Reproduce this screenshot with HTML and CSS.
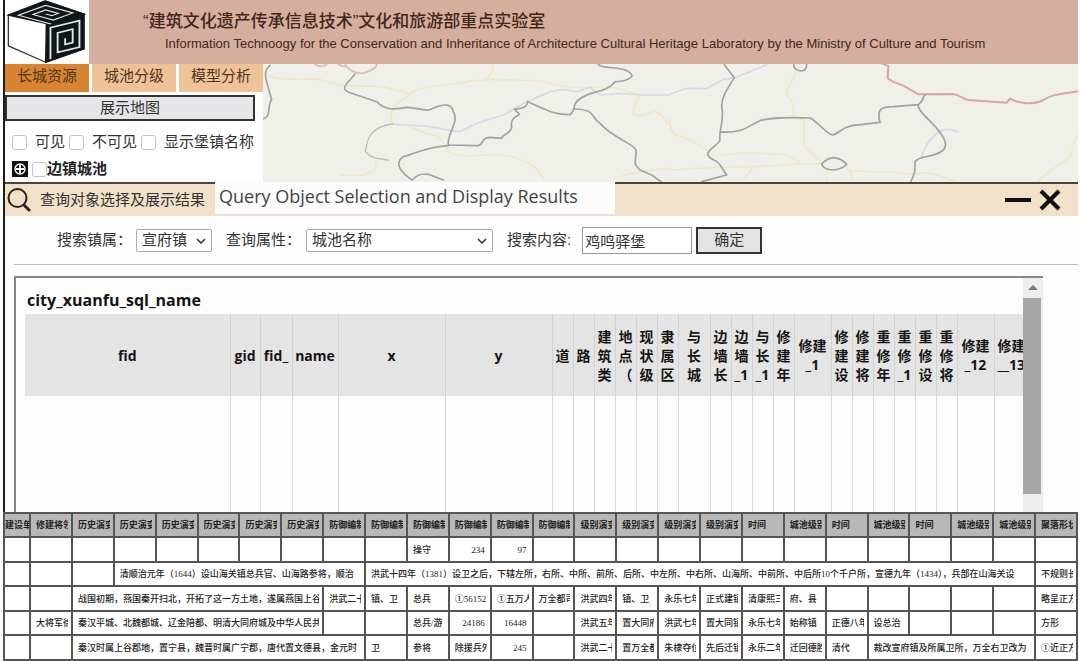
FILE: index.html
```
<!DOCTYPE html>
<html lang="zh-CN">
<head>
<meta charset="utf-8">
<title>城池资源查询</title>
<link rel="stylesheet" href="styles.css">
</head>
<body>
<div class="app">
  <div class="workspace">
    <header class="banner">
      <svg class="logo" viewBox="15 0 250 190" aria-hidden="true">
        <path d="M25 45 135 3 250 42V145L136 185 25 136Z" fill="#fff" stroke="#333" stroke-width="4" stroke-linejoin="round"/>
        <path d="M25 45 135 3 250 42 138 70Z" fill="#101518" stroke="#101518" stroke-width="4"/>
        <path d="M138 70 250 42V145L136 185Z" fill="#101518" stroke="#101518" stroke-width="4"/>
        <g fill="none" stroke="#dfe5e6">
          <path transform="matrix(11.3 3.1 11 -4 25 46)" stroke-width=".5" d="M10 1.3H1.4V8.6H8.6V3.3H3.3V6.7H6.6V5H5"/>
          <path transform="matrix(11.2 -2.7 0 10.8 138 71)" stroke-width=".5" d="M1.1 10V1.3H8.8V8.6H3V3.2H7V6.9H5V5.2"/>
        </g>
      </svg>
      <div class="banner-text">
        <h1>“建筑文化遗产传承信息技术”文化和旅游部重点实验室</h1>
        <p>Information Technoogy for the Conservation and Inheritance of Architecture Cultural Heritage Laboratory by the Ministry of Culture and Tourism</p>
      </div>
    </header>

    <div class="main">
      <aside class="sidebar">
        <nav class="tabs">
          <button class="tab active">长城资源</button>
          <button class="tab">城池分级</button>
          <button class="tab">模型分析</button>
        </nav>
        <button class="show-map">展示地图</button>
        <div class="checks">
          <label><input type="checkbox">可见</label>
          <label><input type="checkbox">不可见</label>
          <label><input type="checkbox">显示堡镇名称</label>
        </div>
        <div class="tree">
          <button class="expand" aria-label="展开">
            <svg viewBox="0 0 16 16"><path d="M0 0H16V16H0Z" fill="#111"/><circle cx="8" cy="8" r="5" fill="none" stroke="#fff" stroke-width="1.4"/><path d="M8 4V12M4 8H12" stroke="#fff" stroke-width="1.8"/></svg>
          </button>
          <label><input type="checkbox">边镇城池</label>
        </div>
      </aside>
      <div class="map">
        <svg viewBox="0 0 2445 354" preserveAspectRatio="xMinYMin slice" aria-hidden="true">
          <g fill="none" stroke-linejoin="round" stroke-linecap="round">
            <g transform="translate(-9 -192)">
              <path d="M25 225C60 245 130 235 180 238C230 262 290 258 350 258C390 262 420 275 450 282C440 300 410 300 400 325C390 340 392 360 398 372M450 280C490 255 530 258 580 252C640 240 670 240 700 238C780 242 840 238 880 252C920 265 960 262 1010 262C1060 255 1090 270 1140 285M700 192C698 215 690 230 675 240M346 482C350 490 350 505 335 515C310 530 270 528 240 525M398 372C450 370 470 395 500 400C540 405 545 425 560 440C560 470 620 470 680 465C740 460 800 480 820 500C840 515 850 530 850 545M1140 285C1130 300 1120 320 1120 345C1160 355 1170 330 1190 335C1210 345 1220 370 1230 375M1080 530C1120 515 1170 510 1230 505" stroke="#f1e6c8" stroke-width="5"/>
              <path d="M398 372C450 380 500 370 560 390L600 395 650 370 730 345 800 305 870 275 910 268 950 275 990 262 1020 285 1080 280 1140 285 1230 285" stroke="#d5d8e5" stroke-width="5"/>
              <path d="M255 192C265 210 280 220 310 220C335 212 350 205 350 192M165 192Q180 205 200 194M235 192Q245 200 255 200" stroke="#dcbcbd" stroke-width="5"/>
              <path d="M30 196C5 215 20 245 35 298C20 320 35 350 10 356M285 222L270 240C250 260 245 270 275 280L350 305C370 325 390 332 440 322C500 325 490 340 530 320C560 310 575 315 580 335C600 365 560 400 565 435L655 437C675 430 660 415 690 412L725 415C730 400 755 400 755 380C750 350 775 350 778 342L763 328C785 325 800 325 803 305C850 325 880 345 930 344C950 330 935 315 955 300C990 270 1040 280 1065 245C1100 245 1120 230 1115 225C1100 195 1030 210 1015 194M945 327C1010 330 990 350 1020 370C1060 415 1120 430 1128 450C1130 490 1115 485 1140 510L1175 525 1203 545M565 437C500 440 470 460 430 470C400 490 425 520 457 540C475 520 490 520 505 523L550 540" stroke="#a0a1a0" stroke-width="5"/>
              <path d="M398 372C330 380 320 420 316 455C335 475 350 475 385 480" stroke="#bbbcb8" stroke-width="4"/>
            </g>
            <g transform="translate(1221 -192)">
              <path d="M378 215C370 245 340 270 355 290C375 305 370 340 372 352L400 360C405 385 395 410 405 440C420 460 445 475 455 490C430 495 400 490 370 492C300 500 240 500 180 500L0 510M0 360C0 400 10 405 50 415C90 430 100 450 135 468C200 455 260 460 320 462C370 465 380 490 400 490M250 502L220 540M470 510V545M540 510L550 545M530 510C600 520 650 510 690 520L740 522C780 510 810 530 850 542M1228 400C1200 430 1220 450 1195 475C1170 495 1120 520 1105 545" stroke="#f1e6c8" stroke-width="5"/>
              <path d="M0 282L50 265 110 266 160 238 195 233 240 215 290 194M862 395C830 380 810 390 790 410C770 430 765 440 753 475" stroke="#d5d8e5" stroke-width="5"/>
              <g stroke="#a0a1a0" stroke-width="5">
                <path d="M163 194L193 233C170 270 155 290 155 320C165 360 145 390 150 420C140 440 110 450 113 465C125 485 140 475 150 495L170 525 95 545M150 396C220 400 230 380 270 362C310 350 370 352 420 354C450 370 460 395 487 405C510 400 510 385 545 377L630 367C620 330 630 320 670 320L745 314C765 300 755 290 765 286M745 314C740 330 780 360 800 385C840 430 825 445 820 450C790 475 750 465 735 485C735 515 735 520 722 545"/>
                <path d="M372 194C370 205 380 213 395 213C410 210 410 200 410 194M455 493C465 480 475 475 490 473C510 475 520 480 530 493C520 505 510 508 490 510C470 508 460 505 455 493Z"/>
              </g>
              <path d="M635 190L655 198 653 235C670 250 690 250 705 260L745 283 850 282C870 285 880 298 895 300L1010 308 1020 296C1050 312 1090 315 1120 300C1150 280 1180 282 1228 273" stroke="#d9a3ab" stroke-width="6"/>
            </g>
          </g>
        </svg>
      </div>
    </div>

    <section class="query">
      <div class="query-head">
        <svg class="search-icon" viewBox="0 0 24 24" aria-hidden="true"><circle cx="10.500" cy="10" r="9" fill="none" stroke="#2b241c" stroke-width="2"/><path d="M17 17 22 22" stroke="#2b241c" stroke-width="3" stroke-linecap="round"/></svg>
        <h2>查询对象选择及展示结果</h2>
        <div class="translation">Query Object Selection and Display Results</div>
        <div class="window-buttons">
          <button aria-label="最小化"><svg viewBox="0 0 28 24"><path d="M1 12H27" stroke="#111" stroke-width="4"/></svg></button>
          <button aria-label="关闭"><svg viewBox="0 0 24 24"><path d="M3 3 21 21M21 3 3 21" stroke="#111" stroke-width="4"/></svg></button>
        </div>
      </div>
      <form class="query-form">
        <label for="town">搜索镇属：</label>
        <span class="select town">
          <select id="town"><option>宣府镇</option></select>
          <svg viewBox="0 0 10 6"><path d="M1 1 5 5 9 1" fill="none" stroke="#333" stroke-width="1.500"/></svg>
        </span>
        <label for="attr">查询属性：</label>
        <span class="select attr">
          <select id="attr"><option>城池名称</option></select>
          <svg viewBox="0 0 10 6"><path d="M1 1 5 5 9 1" fill="none" stroke="#333" stroke-width="1.500"/></svg>
        </span>
        <label for="content">搜索内容:</label>
        <input id="content" type="text" value="鸡鸣驿堡">
        <button type="button">确定</button>
      </form>
      <div class="results">
        <div class="results-body">
          <h3 id="layer-name">city_xuanfu_sql_name</h3>
          <table class="fields" aria-labelledby="layer-name">
            <colgroup>
              <col class="c-fid"><col class="c-30"><col class="c-32"><col class="c-46"><col class="c-x"><col class="c-x">
              <col span="6" class="c-21"><col class="c-32"><col span="4" class="c-21"><col class="c-37"><col span="6" class="c-21"><col class="c-37"><col class="c-42">
            </colgroup>
            <thead>
              <tr>
                <th>fid</th><th>gid</th><th>fid_</th><th>name</th><th>x</th><th>y</th>
                <th>道</th><th>路</th><th>建<br>筑<br>类</th><th>地<br>点<br>（</th><th>现<br>状<br>级</th><th>隶<br>属<br>区</th>
                <th>与<br>长<br>城</th><th>边<br>墙<br>长</th><th>边<br>墙<br>_1</th><th>与<br>长<br>_1</th><th>修<br>建<br>年</th>
                <th>修建<br>_1</th><th>修<br>建<br>设</th><th>修<br>建<br>将</th><th>重<br>修<br>年</th><th>重<br>修<br>_1</th>
                <th>重<br>修<br>设</th><th>重<br>修<br>将</th><th>修建<br>_12</th><th class="last">修建<br>__13</th>
              </tr>
            </thead>
            <tbody>
              <tr><td></td><td></td><td></td><td></td><td></td><td></td><td></td><td></td><td></td><td></td><td></td><td></td><td></td><td></td><td></td><td></td><td></td><td></td><td></td><td></td><td></td><td></td><td></td><td></td><td></td><td></td></tr>
            </tbody>
          </table>
        </div>
        <div class="scrollbar" aria-hidden="true">
          <svg viewBox="0 0 20 20"><path d="M5 12 10 7 15 12Z" fill="#777"/></svg>
          <div class="thumb"></div>
        </div>
      </div>
    </section>
  </div>

  <table class="records">
    <colgroup><col class="c-first"><col span="25"></colgroup>
    <thead>
      <tr>
        <th class="cut">建设单</th><th>修建将领</th><th>历史演变</th><th>历史演变</th><th>历史演变</th><th>历史演变</th><th>历史演变</th><th>历史演变</th>
        <th>防御编制</th><th>防御编制</th><th>防御编制</th><th>防御编制</th><th>防御编制</th><th>防御编制</th>
        <th>级别演变</th><th>级别演变</th><th>级别演变</th><th>级别演变</th><th>时间</th><th>城池级别</th><th>时间</th><th>城池级别</th><th>时间</th><th>城池级别</th><th>城池级别</th><th>聚落形状</th>
      </tr>
    </thead>
    <tbody>
      <tr><td></td><td></td><td></td><td></td><td></td><td></td><td></td><td></td><td></td><td></td><td>操守</td><td class="num">234</td><td class="num">97</td><td></td><td></td><td></td><td></td><td></td><td></td><td></td><td></td><td></td><td></td><td></td><td></td><td></td></tr>
      <tr><td></td><td></td><td></td><td colspan="6">清顺治元年（1644）设山海关镇总兵官、山海路参将，顺治</td><td colspan="16">洪武十四年（1381）设卫之后，下辖左所，右所、中所、前所、后所、中左所、中右所、山海所、中前所、中后所10个千户所，宣德九年（1434），兵部在山海关设</td><td>不规则长</td></tr>
      <tr><td></td><td></td><td colspan="6">战国初期，燕国秦开扫北，开拓了这一方土地，遂属燕国上谷</td><td>洪武二十</td><td>镇、卫</td><td>总兵</td><td>①56152</td><td>①五万人</td><td>万全都司</td><td>洪武四年</td><td>镇、卫</td><td>永乐七年</td><td>正式建镇</td><td>清康熙三</td><td>府、县</td><td></td><td></td><td></td><td></td><td></td><td>略呈正方</td></tr>
      <tr><td></td><td>大将军徐</td><td colspan="6">秦汉平城、北魏都城、辽金陪都、明清大同府城及中华人民共</td><td></td><td></td><td>总兵/游</td><td class="num">24186</td><td class="num">16448</td><td></td><td>洪武五年</td><td>置大同府</td><td>洪武七年</td><td>置大同镇</td><td>永乐七年</td><td>始称镇</td><td>正德八年</td><td>设总治</td><td></td><td></td><td></td><td>方形</td></tr>
      <tr><td></td><td></td><td colspan="7">秦汉时属上谷郡地，置宁县，魏晋时属广宁郡，唐代置文德县，金元时</td><td>卫</td><td>参将</td><td>除援兵外</td><td class="num">245</td><td></td><td>洪武二十</td><td>置万全都</td><td>朱棣夺位</td><td>先后迁镇</td><td>永乐二年</td><td>迁回德胜</td><td>清代</td><td colspan="4">裁改宣府镇及所属卫所，万全右卫改为</td><td>①近正方</td></tr>
    </tbody>
  </table>
</div>
</body>
</html>
```
FILE: styles.css
```
* { box-sizing: border-box; }

body {
  margin: 0;
  background: #fdfdfd;
  color: #333;
  font: 15px/20px "Liberation Sans", "Noto Sans CJK SC", sans-serif;
}

h1, h2, h3, p { margin: 0; }
button, input, select { font: inherit; color: inherit; margin: 0; padding: 0; }

.app {
  display: flex;
  flex-direction: column;
  height: 100vh;
  padding: 0 2px 0 3px;
  overflow: hidden;
}

.workspace {
  flex: 1;
  min-height: 0;
  display: flex;
  flex-direction: column;
  border-left: 2px solid #1c1c1c;
}

/* Banner */
.banner { display: flex; height: 64px; background: #d5ae9e; }
.logo { width: 84px; height: 64px; background: #fff; }
.banner-text { padding: 12px 0 0 54px; color: #43261c; white-space: nowrap; }
.banner-text h1 { font-size: 17px; line-height: 20px; font-weight: 500; }
.banner-text p { padding-left: 22px; font-size: 13px; line-height: 24px; }

/* Sidebar and map */
.main { display: flex; height: 118px; }
.sidebar { width: 258px; background: #fff; }
.tabs { display: flex; gap: 3px; }
.tab {
  flex: 1;
  height: 28px;
  padding-bottom: 5px;
  border: 0;
  background: #efc298;
  color: #4f3520;
}
.tab.active { background: #d98430; }
.show-map {
  display: block;
  width: 250px;
  height: 26px;
  margin-top: 3px;
  border: 2px solid #333;
  background: #e6e6e8;
}
.checks, .tree { display: flex; align-items: center; padding-left: 7px; }
.checks { gap: 4px; height: 32px; margin-top: 5px; white-space: nowrap; }
.checks label { display: flex; align-items: center; gap: 8px; }
.tree { gap: 4px; height: 22px; font-weight: 700; color: #222; }
.tree label { display: flex; align-items: center; }
input[type="checkbox"] {
  appearance: none;
  width: 15px;
  height: 15px;
  border: 1px solid #c4c4c4;
  border-radius: 3px;
  background: #fff;
}
.expand { width: 16px; height: 16px; border: 0; background: none; }
.expand svg { display: block; }
.map { flex: 1; min-width: 0; background: #f0f0eb; }
.map svg { display: block; width: 100%; height: 100%; }

/* Query window */
.query {
  flex: 1;
  min-height: 0;
  display: flex;
  flex-direction: column;
  background: #fdfdfd;
}
.query-head {
  display: flex;
  align-items: center;
  height: 34px;
  border-top: 2px solid #4d443a;
  background: #f1e1c8;
}
.search-icon { width: 24px; height: 24px; margin-left: 2px; }
.query-head h2 { margin-left: 9px; font-size: 15px; font-weight: 400; white-space: nowrap; }
.translation {
  align-self: flex-start;
  width: 400px;
  height: 32px;
  margin: -2px 0 0 10px;
  padding-left: 4px;
  background: #fdfcfc;
  font: 400 18px/28px "Open Sans", "Noto Sans", sans-serif;
  color: #444;
  white-space: nowrap;
}
.window-buttons { display: flex; gap: 6px; margin: 0 16px 0 auto; }
.window-buttons button { border: 0; background: none; height: 24px; }
.window-buttons svg { display: block; height: 24px; }

.query-form {
  display: flex;
  align-items: center;
  height: 49px;
  margin-left: 9px;
  padding-left: 43px;
  border-bottom: 1px solid #b9bcc0;
  white-space: nowrap;
}
.select { position: relative; }
.select select {
  appearance: none;
  display: block;
  width: 100%;
  height: 23px;
  padding-left: 5px;
  border: 1px solid #aaa;
  border-radius: 2px;
  background: #fff;
  line-height: 20px;
}
.select svg { position: absolute; right: 6px; top: 9px; width: 10px; height: 6px; }
.select.town { width: 76px; margin: 0 14px 0 4px; }
.select.attr { width: 187px; margin: 0 14px 0 5px; }
.query-form input {
  width: 110px;
  height: 27px;
  margin-left: 11px;
  padding-left: 2px;
  border: 1px solid #999;
  background: #fff;
}
.query-form button {
  width: 66px;
  height: 27px;
  margin-left: 4px;
  border: 2px solid #333;
  background: #e3e3e3;
}

.results {
  flex: 1;
  min-height: 0;
  display: flex;
  margin: 11px 35px 0 9px;
  border: solid #858585;
  border-width: 2px 0 0 2px;
  overflow: hidden;
}
.results-body {
  flex: 1;
  min-width: 0;
  display: flex;
  flex-direction: column;
  padding: 10px 0 0 9px;
  overflow: hidden;
}
.results h3 {
  padding: 0 0 2px 2px;
  font: 700 16px/24px "Open Sans", "Noto Sans", sans-serif;
  color: #151515;
}
.fields {
  flex: none;
  width: 1011px;
  table-layout: fixed;
  border-collapse: collapse;
  color: #151515;
}
.fields th {
  height: 82px;
  padding: 0;
  background: #e4e4e4;
  border-right: 1px solid #d2d2d2;
  font: 700 14px/19px "Open Sans", "Noto Sans CJK SC", sans-serif;
}
.fields th.last { padding-left: 3px; text-align: left; }
.fields td { height: 400px; padding: 0; border-right: 1px solid #d8d8d8; }
.c-fid { width: 205px; }
.c-21 { width: 21px; }
.c-30 { width: 30px; }
.c-32 { width: 32px; }
.c-37 { width: 37px; }
.c-42 { width: 42px; }
.c-46 { width: 46px; }
.c-x { width: 107px; }

.scrollbar { width: 20px; background: #ededed; }
.scrollbar svg { display: block; width: 20px; height: 20px; }
.thumb { width: 18px; height: 196px; background: #a6a6a6; }

/* Records sheet */
.records {
  flex: none;
  width: 100%;
  table-layout: fixed;
  border-collapse: collapse;
  border-bottom: 2px solid #444;
  background: #fff;
  color: #222;
  font: 500 9px/12px "Liberation Serif", "Noto Sans CJK SC", serif;
}
.records .c-first { width: 26px; }
.records th, .records td {
  height: 25px;
  padding: 0 3px 0 5px;
  border: 2px solid #555;
  overflow: clip;
  overflow-clip-margin: content-box;
  white-space: nowrap;
  text-align: left;
}
.records th { height: 24px; background: #b9b8b9; font-weight: 700; }
.records tr:nth-child(even) td { height: 24px; }
.records .num { padding-right: 5px; text-align: right; }
.records .cut { padding: 0; }
```
